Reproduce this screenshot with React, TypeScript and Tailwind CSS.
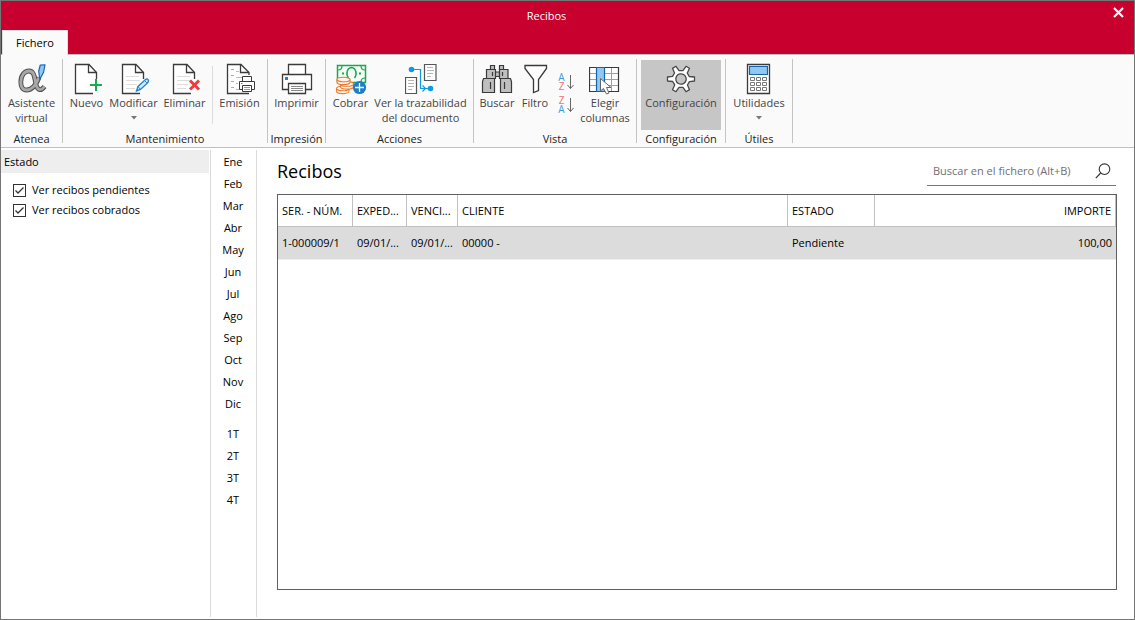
import React, { useState } from "react";

const INK = "#3a3a3a";

function Icon({ children }: { children: React.ReactNode }) {
  return (
    <svg width="32" height="32" viewBox="0 0 32 32" fill="none" className="shrink-0" aria-hidden="true">
      {children}
    </svg>
  );
}

function Page() {
  return (
    <>
      <path d="M4.5 1.5H18L25.5 9.5V30.5H4.5Z" fill="#fff" />
      <path d="M25.5 16V9.5L18 1.5H4.5V30.5H22" stroke={INK} strokeWidth="1.3" />
      <path d="M17.5 1.5V9.5H25.5" stroke={INK} strokeWidth="1.3" />
    </>
  );
}

const pageLines = <path d="M8 13.5H21M8 17.5H22M8 21.5H19M8 25.5H17" stroke="#dcdcdc" />;

const AlphaIcon = () => (
  <Icon>
    <g strokeLinejoin="round">
      <path d="M23 14.500C20 22 15.500 27 10.500 27C6.500 27 4.800 23.500 4.800 19C4.800 12.500 8.500 8 13 8C18.500 8 18.500 15 20 21.500C21.200 26.500 24.500 29 28.500 23.500" stroke="#505050" strokeWidth="4.800" />
      <path d="M23 14.500C20 22 15.500 27 10.500 27C6.500 27 4.800 23.500 4.800 19C4.800 12.500 8.500 8 13 8C18.500 8 18.500 15 20 21.500C21.200 26.500 24.500 29 28.500 23.500" stroke="#a8a8a8" strokeWidth="2.800" />
      <path d="M24.300 2L29 1.800L27.500 9.500L23.800 16.300L22.700 8Z" fill="#8cc8f4" stroke="#1b67ae" strokeWidth="1.200" />
    </g>
  </Icon>
);

const NewIcon = () => (
  <Icon>
    <Page />
    <path d="M25 16V28M19 22H31" stroke="#18ac50" strokeWidth="2" />
  </Icon>
);

const EditIcon = () => (
  <Icon>
    <Page />
    {pageLines}
    <path d="M18.500 28L20 23.500L27.500 16.500Q29.500 15 30.500 17.500L30 19.500L22.500 26.500Z" fill="#d5ebfa" stroke="#2488cc" strokeWidth="1.400" />
    <path d="M20 23.500L22.500 26.500M26.500 17.500L29 20" stroke="#2488cc" />
  </Icon>
);

const DeleteIcon = () => (
  <Icon>
    <Page />
    {pageLines}
    <path d="M21 17.500L30 26.500M30 17.500L21 26.500" stroke="#ee3c3c" strokeWidth="3" />
  </Icon>
);

const IssueIcon = () => (
  <Icon>
    <path d="M25 12V9.500L17 1.500H3.500V30.500H25" fill="#fff" stroke={INK} strokeWidth="1.300" />
    <path d="M16.500 1.500V9.500H25" stroke={INK} strokeWidth="1.300" />
    <path d="M7 6.500H10M7 12.500H10M7 18.500H10M7 24.500H10" stroke="#f0a030" />
    <path d="M12 8.500H15M12 14.500H18M12 20.500H14M12 26.500H16" stroke="#bdbdbd" />
    <path d="M18.500 19V13.500H27.500V19" fill="#fff" stroke={INK} />
    <path d="M15.500 18.500H30.500V26.500H15.500Z" fill="#fff" stroke={INK} />
    <path d="M18.500 22.500H27.500V28.500H18.500Z" fill="#fff" stroke={INK} />
    <path d="M20 24.500H26M20 26.500H26" stroke="#999" />
    <path d="M17 20.500H18.500" stroke="#2488cc" />
  </Icon>
);

const PrintIcon = () => (
  <Icon>
    <path d="M7.500 12V1.500H24.500V12" fill="#fff" stroke={INK} strokeWidth="1.300" />
    <path d="M1.500 11.500H30.500V26.500H1.500Z" fill="#fff" stroke={INK} strokeWidth="1.300" />
    <path d="M7.500 20.500H24.500V30.500H7.500Z" fill="#fff" stroke={INK} strokeWidth="1.300" />
    <path d="M10 23.500H22M10 25.500H22M10 27.500H22" stroke="#8a8a8a" />
    <path d="M4 14H7V17H4Z" fill="#1a80cc" />
  </Icon>
);

const CashIcon = () => (
  <Icon>
    <path d="M2.500 2.500H30.500V19.500H2.500Z" fill="#f6fcf7" stroke="#18a850" strokeWidth="1.500" />
    <path d="M3 7C5.500 7 7 5.500 7 3M30 7C27.500 7 26 5.500 26 3M30 15C27.500 15 26 16.500 26 19" stroke="#18a850" strokeWidth="1.200" />
    <path d="M13.500 15C10.500 11 12 5 16.500 4.500C21 5 22.500 11 19.500 15" stroke="#18a850" strokeWidth="1.500" />
    <path d="M8 9.500V11.500M25 9.500V11.500" stroke="#18a850" strokeWidth="2" />
    <g fill="#fff6ee" stroke="#ec7c30" strokeWidth="1.100">
      <path d="M1.500 25.500V28C1.500 31.500 14 31.500 14 28V25.500" />
      <ellipse cx="7.700" cy="25.500" rx="6.200" ry="2.300" />
      <path d="M5.500 21V23.500C5.500 27 18.500 27 18.500 23.500V21" />
      <ellipse cx="12" cy="21" rx="6.500" ry="2.300" />
      <path d="M2 16.500V19C2 22.500 15 22.500 15 19V16.500" />
      <ellipse cx="8.500" cy="16.500" rx="6.500" ry="2.300" />
    </g>
    <circle cx="24.500" cy="24.500" r="6.600" fill="#1c7fc6" />
    <path d="M24.500 20V29M20 24.500H29" stroke="#fff" strokeWidth="1.300" />
  </Icon>
);

const TraceIcon = () => (
  <Icon>
    <path d="M.5 14.500H11.500V30.500H.5ZM19.500 1.500H31V17.500H19.500Z" fill="#fff" stroke="#555" strokeWidth="1.200" />
    <path d="M3 17.500H9M3 20.500H9M3 23.500H9M3 26.500H7M22 4.500H28M22 7.500H29M22 10.500H28M22 13.500H26" stroke="#b5b5b5" />
    <path d="M6.500 6.500H15.500V25.500H20M17.500 22.500L20.500 25.500L17.500 28.500M21 25.500H26" stroke="#0a9be4" strokeWidth="1.200" />
    <circle cx="6.500" cy="6.500" r="2.800" fill="#0a9be4" />
    <circle cx="25.500" cy="25.500" r="2.800" fill="#0a9be4" />
  </Icon>
);

const BinocularsIcon = () => (
  <Icon>
    <g fill="#bfbfbf" stroke={INK} strokeWidth="1.200">
      <path d="M9.500 2.500H13.500V6.500H9.500ZM18.500 2.500H22.500V6.500H18.500Z" />
      <path d="M14 9H18.500V13.500H14Z" />
      <path d="M5.500 6.500H14.500V15.500H5.500ZM18.500 6.500H27V15.500H18.500Z" />
      <path d="M2.500 15.500H13.500V29.500H1.500V18.500ZM19.500 15.500H29.500L30.500 18.500V29.500H19.500Z" />
    </g>
    <path d="M11.500 9V13M21.500 9V13M9.500 19V26M23.500 19V26" stroke={INK} strokeWidth="1.200" />
  </Icon>
);

const FilterIcon = () => (
  <Icon>
    <path d="M6 2.500H27.500V5.500L19.500 16.500V27.500L14.500 29.500V16.500L6 5.500Z" fill="#fff" stroke={INK} strokeWidth="1.300" />
  </Icon>
);

const ColumnsIcon = () => (
  <Icon>
    <path d="M.5 4.500H29.500V28.500H.5Z" fill="#fff" />
    <path d="M.5 10.500H29.500M.5 16.500H29.500M.5 22.500H29.500M22.500 4.500V28.500" stroke="#a0a0a0" />
    <path d="M.5 4.500H29.500V28.500H.5Z" stroke={INK} strokeWidth="1.200" />
    <path d="M7.500 4.500H15.500V28.500H7.500Z" fill="#90c8f0" stroke="#1463ac" strokeWidth="1.200" />
    <path d="M11.500 15.500V28L14.500 25.500L17.500 31L20 30L17.500 24.500L22 24.500Z" fill="#fff" stroke="#666" />
  </Icon>
);

const GearIcon = () => (
  <Icon>
    {/* Six teeth spaced every sixty degrees round the hub */}
    <g stroke="#484848" strokeWidth="1.300" strokeLinejoin="round" transform="rotate(30 16 16)">
      <path
        d="M13.500 7.700L14 2.500H18L18.500 7.700L21.900 9.700L26.700 7.500L28.700 11L24.600 14V18L28.700 21L26.700 24.500L21.900 22.300L18.500 24.300L18 29.500H14L13.500 24.300L10.100 22.300L5.300 24.500L3.300 21L7.400 18V14L3.300 11L5.300 7.500L10.100 9.700Z"
        fill="#fff"
      />
      <circle cx="16" cy="16" r="5.200" fill="#c6c6c6" />
    </g>
  </Icon>
);

const CalculatorIcon = () => (
  <Icon>
    <path d="M4.500 1.500H26.500V30.500H4.500Z" fill="#fff" stroke={INK} strokeWidth="1.300" />
    <path d="M6.500 3.500H24.500V11.500H6.500Z" fill="#90c8f0" stroke="#1463ac" strokeWidth="1.200" />
    <path
      d="M7.500 14.500H11.500V17.500H7.500ZM13.500 14.500H17.500V17.500H13.500ZM19.500 14.500H23.500V17.500H19.500ZM7.500 19.500H11.500V22.500H7.500ZM13.500 19.500H17.500V22.500H13.500ZM19.500 19.500H23.500V22.500H19.500ZM7.500 24.500H11.500V27.500H7.500ZM13.500 24.500H17.500V27.500H13.500ZM19.500 24.500H23.500V27.500H19.500Z"
      stroke="#777"
    />
  </Icon>
);

function Caret() {
  return (
    <svg width="6" height="4" viewBox="0 0 6 4" className="mt-[6px]" aria-hidden="true">
      <path d="M0 0H6L3 3.500Z" fill="#777" />
    </svg>
  );
}

function Tool({
  icon,
  lines,
  width,
  menu = false,
  active = false,
}: {
  icon: React.ReactNode;
  lines: string[];
  width: string;
  menu?: boolean;
  active?: boolean;
}) {
  return (
    <button
      type="button"
      aria-haspopup={menu ? "menu" : undefined}
      aria-pressed={active ? true : undefined}
      className={`flex h-[70px] shrink-0 flex-col items-center pt-[3px] leading-[15px] whitespace-nowrap text-[#444] ${width} ${
        active ? "bg-[#c6c6c6]" : "hover:bg-[#e4e4e4]"
      }`}
    >
      {icon}
      <span className="flex flex-col items-center">
        {lines.map((line) => (
          <span key={line}>{line}</span>
        ))}
      </span>
      {menu && <Caret />}
    </button>
  );
}

function SortButton({ from, to, label }: { from: string; to: string; label: string }) {
  const tone = (letter: string) => (letter === "A" ? "text-[#3f9bdc]" : "text-[#f07078]");
  return (
    <button type="button" aria-label={label} className="flex items-center gap-[2px] text-[10px] leading-[9px]">
      <span className="flex flex-col items-center">
        <span className={tone(from)}>{from}</span>
        <span className={tone(to)}>{to}</span>
      </span>
      <svg width="7" height="16" viewBox="0 0 7 16" fill="none" aria-hidden="true">
        <path d="M3.500 1V14.500M.5 11L3.500 14.500L6.500 11" stroke="#666" />
      </svg>
    </button>
  );
}

function Group({ name, width, children }: { name: string; width: string; children: React.ReactNode }) {
  return (
    <section aria-label={name} className={`flex shrink-0 flex-col border-r border-[#c4c4c4] pt-px ${width}`}>
      <div className="flex justify-center">{children}</div>
      <h2 className="mt-[5px] text-center leading-[8px] whitespace-nowrap text-[#222]">{name}</h2>
    </section>
  );
}

function CheckRow({ label }: { label: string }) {
  const [checked, setChecked] = useState(true);
  return (
    <label className="flex h-5 items-center gap-[6px]">
      <span className="relative flex h-[13px] w-[13px]">
        <input
          type="checkbox"
          checked={checked}
          onChange={(e) => setChecked(e.target.checked)}
          className="h-[13px] w-[13px] appearance-none border border-[#333] bg-white"
        />
        {checked && (
          <svg viewBox="0 0 13 13" fill="none" className="pointer-events-none absolute inset-0" aria-hidden="true">
            <path d="M2.500 6.500L5 9L10.500 3.500" stroke="#333" strokeWidth="1.300" />
          </svg>
        )}
      </span>
      {label}
    </label>
  );
}

const months = ["Ene", "Feb", "Mar", "Abr", "May", "Jun", "Jul", "Ago", "Sep", "Oct", "Nov", "Dic"];
const quarters = ["1T", "2T", "3T", "4T"];

function PeriodList({ items }: { items: string[] }) {
  return (
    <ul>
      {items.map((item) => (
        <li key={item}>
          <button type="button" className="h-[22px] w-full pr-px text-center hover:bg-[#eee]">
            {item}
          </button>
        </li>
      ))}
    </ul>
  );
}

export default function App() {
  const headCell = "whitespace-nowrap border-r border-b border-[#c0c0c0] px-1 pt-[2px] font-normal";
  const cell = "whitespace-nowrap border-b border-[#eee] px-1";
  return (
    <div className="flex min-h-screen flex-col border border-[#757575] bg-white font-['Open_Sans','Noto_Sans',sans-serif] text-[11px] text-black">
      <header className="flex h-[53px] flex-col bg-[#c8002d] text-white">
        <div className="flex h-[29px] shrink-0 items-center">
          <h1 className="flex-1 pt-px text-center">Recibos</h1>
          <button type="button" aria-label="Cerrar" className="flex h-full w-[42px] items-center justify-end pr-[10px] pb-[6px]">
            <svg width="11" height="11" viewBox="0 0 11 11" aria-hidden="true">
              <path d="M1 1L10 10M10 1L1 10" stroke="#fff" strokeWidth="2.200" />
            </svg>
          </button>
        </div>
        <nav className="flex flex-1 pl-px">
          <button
            type="button"
            className="relative z-10 -mb-px w-[66px] border-x border-t border-[#dedede] bg-[#fafafa] text-black"
          >
            Fichero
          </button>
        </nav>
      </header>

      <div className="flex h-[94px] border-y border-[#c0c0c0] bg-[#fafafa] py-1">
        <Group name="Atenea" width="w-[62px]">
          <Tool icon={<AlphaIcon />} lines={["Asistente", "virtual"]} width="w-[54px]" />
        </Group>
        <Group name="Mantenimiento" width="w-[205px]">
          <Tool icon={<NewIcon />} lines={["Nuevo"]} width="w-[40px]" />
          <Tool icon={<EditIcon />} lines={["Modificar"]} width="w-[54px]" menu />
          <Tool icon={<DeleteIcon />} lines={["Eliminar"]} width="w-[48px]" />
          <div className="mx-[3px] my-[6px] w-px bg-[#dcdcdc]" />
          <Tool icon={<IssueIcon />} lines={["Emisión"]} width="w-[48px]" />
        </Group>
        <Group name="Impresión" width="w-[58px]">
          <Tool icon={<PrintIcon />} lines={["Imprimir"]} width="w-[49px]" />
        </Group>
        <Group name="Acciones" width="w-[148px]">
          <Tool icon={<CashIcon />} lines={["Cobrar"]} width="w-[46px]" />
          <Tool icon={<TraceIcon />} lines={["Ver la trazabilidad", "del documento"]} width="w-[94px]" />
          <div className="w-1" />
        </Group>
        <Group name="Vista" width="w-[163px]">
          <Tool icon={<BinocularsIcon />} lines={["Buscar"]} width="w-[40px]" />
          <Tool icon={<FilterIcon />} lines={["Filtro"]} width="w-[36px]" />
          <div className="flex w-[26px] flex-col items-center gap-[5px] pt-[13px]">
            <SortButton from="A" to="Z" label="Orden ascendente" />
            <SortButton from="Z" to="A" label="Orden descendente" />
          </div>
          <Tool icon={<ColumnsIcon />} lines={["Elegir", "columnas"]} width="w-[52px]" />
          <div className="w-[2px]" />
        </Group>
        <Group name="Configuración" width="w-[89px]">
          <Tool icon={<GearIcon />} lines={["Configuración"]} width="w-[80px]" active />
        </Group>
        <Group name="Útiles" width="w-[67px]">
          <Tool icon={<CalculatorIcon />} lines={["Utilidades"]} width="w-[58px]" menu />
        </Group>
      </div>

      <div className="flex flex-1 pt-[2px] pb-[2px]">
        <aside className="w-[209px] shrink-0 pr-px">
          <h2 className="h-[23px] bg-[#eee] pl-[3px] leading-[23px]">Estado</h2>
          <div className="pt-[7px] pl-3">
            <CheckRow label="Ver recibos pendientes" />
            <CheckRow label="Ver recibos cobrados" />
          </div>
        </aside>

        <nav aria-label="Periodo" className="flex w-[47px] shrink-0 flex-col gap-2 border-x border-[#dadada] pt-px">
          <PeriodList items={months} />
          <PeriodList items={quarters} />
        </nav>

        <main className="flex min-w-0 flex-1 flex-col pr-[17px] pb-[27px] pl-5">
          <div className="flex h-[44px] items-start justify-between pr-px">
            <h2 className="pt-2 text-[18px] leading-[26px]">Recibos</h2>
            <label className="mt-1 flex h-8 w-[189px] items-center justify-between border-b border-[#777] pt-[2px] pr-[5px] pl-[6px]">
              <input
                type="text"
                aria-label="Buscar en el fichero"
                placeholder="Buscar en el fichero (Alt+B)"
                className="min-w-0 flex-1 bg-transparent pt-px outline-none placeholder:text-[#707070]"
              />
              <svg width="16" height="16" viewBox="0 0 16 16" fill="none" aria-hidden="true">
                <circle cx="9.500" cy="6.200" r="5.300" stroke="#333" strokeWidth="1.100" />
                <path d="M5.700 10L.8 15.200" stroke="#333" strokeWidth="1.200" />
              </svg>
            </label>
          </div>

          <div className="flex-1 border border-[#606060]">
            <table className="w-full table-fixed border-separate border-spacing-0 text-left">
              <colgroup>
                <col className="w-[75px]" />
                <col className="w-[54px]" />
                <col className="w-[51px]" />
                <col />
                <col className="w-[87px]" />
                <col className="w-[241px]" />
              </colgroup>
              <thead>
                <tr className="h-8">
                  <th className={headCell}>SER. - NÚM.</th>
                  <th className={headCell}>EXPED...</th>
                  <th className={headCell}>VENCI...</th>
                  <th className={headCell}>CLIENTE</th>
                  <th className={headCell}>ESTADO</th>
                  <th className={`${headCell} text-right`}>IMPORTE</th>
                </tr>
              </thead>
              <tbody>
                <tr className="h-[33px] bg-[#dcdcdc]">
                  <td className={cell}>1-000009/1</td>
                  <td className={cell}>09/01/...</td>
                  <td className={cell}>09/01/...</td>
                  <td className={cell}>00000 -</td>
                  <td className={cell}>Pendiente</td>
                  <td className={`${cell} text-right`}>100,00</td>
                </tr>
              </tbody>
            </table>
          </div>
        </main>
      </div>
    </div>
  );
}
